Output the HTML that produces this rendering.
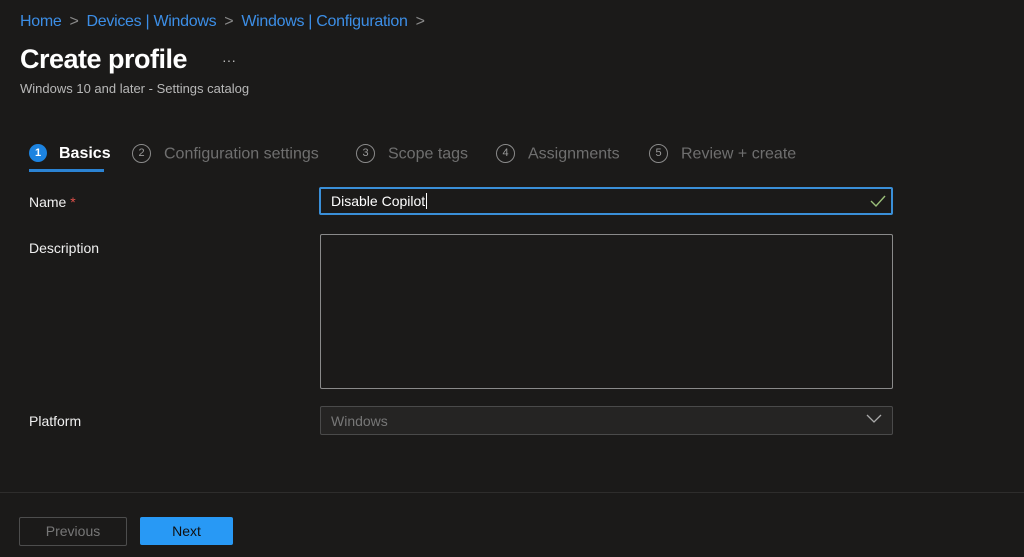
<!DOCTYPE html>
<html><head><style>
body{margin:0;width:1024px;height:557px;background:#1b1a19;font-family:"Liberation Sans",sans-serif;position:relative;overflow:hidden;color:#fff}
.a{position:absolute;white-space:nowrap}
.bc{top:13px;left:20px;font-size:16px;color:#3c8ee6;letter-spacing:-0.3px}
.bc span{color:#8a8a8a;margin:0 8px}
.circ{display:inline-block;width:17px;height:17px;border:1.5px solid #8a8a8a;border-radius:50%;font-size:11px;text-align:center;line-height:17px;color:#9a9a9a;vertical-align:middle;margin-right:13px;box-sizing:content-box;position:relative;top:-1px}
.step{top:145px;font-size:16px;color:#6f6f6f}
.lbl{font-size:14px;color:#f0f0f0}
</style></head><body>
<div class="a bc">Home<span>&gt;</span>Devices | Windows<span>&gt;</span>Windows | Configuration<span>&gt;</span></div>
<div class="a" style="top:44px;left:20px;font-size:27px;font-weight:bold;letter-spacing:-0.5px">Create profile</div>
<div class="a" style="top:52px;left:222px;font-size:14px;color:#bbb">···</div>
<div class="a" style="top:81px;left:20px;font-size:13px;color:#b8b8b8">Windows 10 and later - Settings catalog</div>
<div class="a step" style="left:29px;color:#fff;font-weight:bold"><span class="circ" style="background:#1c83e0;border-color:#1c83e0;color:#fff;width:18px;height:18px;border-width:0;line-height:18px;margin-right:12px">1</span>Basics</div>
<div class="a" style="top:169px;left:29px;width:75px;height:3px;background:#2b83d3"></div>
<div class="a step" style="left:132px"><span class="circ">2</span>Configuration settings</div>
<div class="a step" style="left:356px"><span class="circ">3</span>Scope tags</div>
<div class="a step" style="left:496px"><span class="circ">4</span>Assignments</div>
<div class="a step" style="left:649px"><span class="circ">5</span>Review + create</div>
<div class="a lbl" style="top:194px;left:29px">Name <span style="color:#e0504a">*</span></div>
<div class="a" style="top:187px;left:319px;width:570px;height:24px;border:2px solid #3a8fd8;border-radius:2px;background:#1b1a19"></div>
<div class="a lbl" style="top:193px;left:331px;color:#fff">Disable Copilot<span style="border-left:1px solid #fff;margin-left:1px"></span></div>
<svg class="a" style="top:194px;left:870px" width="16" height="14"><path d="M1 7 L6 12 L15 2" stroke="#9bbf7a" stroke-width="1.4" fill="none"/></svg>
<div class="a lbl" style="top:240px;left:29px">Description</div>
<div class="a" style="top:234px;left:320px;width:571px;height:153px;border:1px solid #8a8a8a;border-radius:2px"></div>
<div class="a lbl" style="top:413px;left:29px">Platform</div>
<div class="a" style="top:406px;left:320px;width:571px;height:27px;border:1px solid #4a4a4a;border-radius:2px;background:#252423"></div>
<div class="a lbl" style="top:413px;left:331px;color:#777">Windows</div>
<svg class="a" style="top:414px;left:866px" width="16" height="10"><path d="M1 1 L8 8 L15 1" stroke="#aaa" stroke-width="1.3" fill="none"/></svg>
<div class="a" style="top:492px;left:0;width:1024px;height:1px;background:#2e2d2c"></div>
<div class="a" style="top:517px;left:19px;width:106px;height:27px;border:1px solid #4d4d4d;border-radius:2px;color:#777;font-size:14px;text-align:center;line-height:27px">Previous</div>
<div class="a" style="top:517px;left:140px;width:93px;height:28px;background:#2899f5;border-radius:2px;color:#101010;font-size:14px;text-align:center;line-height:28px">Next</div>
</body></html>
